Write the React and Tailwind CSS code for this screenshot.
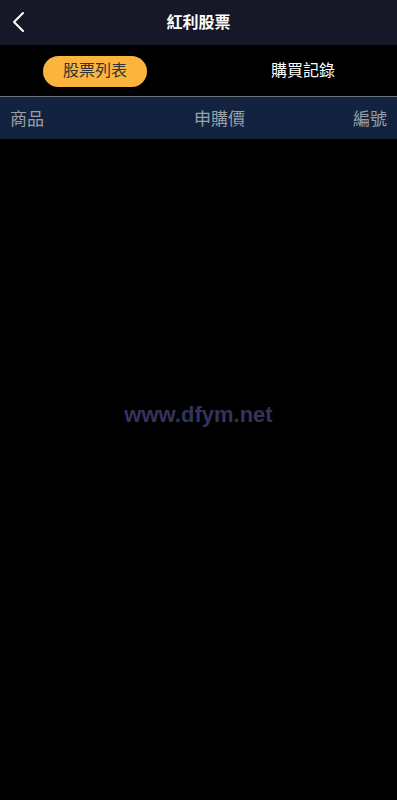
const font = { fontFamily: '"Liberation Sans", "Noto Sans CJK TC", sans-serif' };

function BackIcon() {
  return (
    <svg width="14" height="22" viewBox="0 0 14 22" fill="none">
      <polyline points="11,2 2,11 11,20" stroke="white" strokeWidth="2" strokeLinecap="round" strokeLinejoin="round" />
    </svg>
  );
}

export default function App() {
  return (
    <div className="min-h-[800px] w-full bg-black" style={font}>
      <header className="relative flex h-[45px] items-center justify-center bg-[#171827]">
        <button className="absolute left-[12px] top-[11px]">
          <BackIcon />
        </button>
        <h1 className="text-[16px] font-bold text-white">紅利股票</h1>
      </header>

      <nav className="flex h-[52px] items-center border-b border-[#6b6f78] pt-[1px]">
        <div className="w-[209px]">
          <span className="ml-[43px] flex h-[31px] w-[104px] items-center justify-center rounded-full bg-[#fbb53d] text-[16px] text-[#333]">
            股票列表
          </span>
        </div>
        <div className="flex flex-1 justify-center">
          <span className="text-[16px] text-white">購買記錄</span>
        </div>
      </nav>

      <div className="flex h-[42px] items-center justify-between bg-[#13233f] px-[10px] pt-[4px] text-[17px] text-[#9aa0a8]">
        <span>商品</span>
        <span className="pl-[42px]">申購價</span>
        <span>編號</span>
      </div>

      <div className="flex h-[548px] items-center justify-center pt-[2px]">
        <span className="text-[22px] font-bold text-[#33335e]">www.dfym.net</span>
      </div>
    </div>
  );
}
